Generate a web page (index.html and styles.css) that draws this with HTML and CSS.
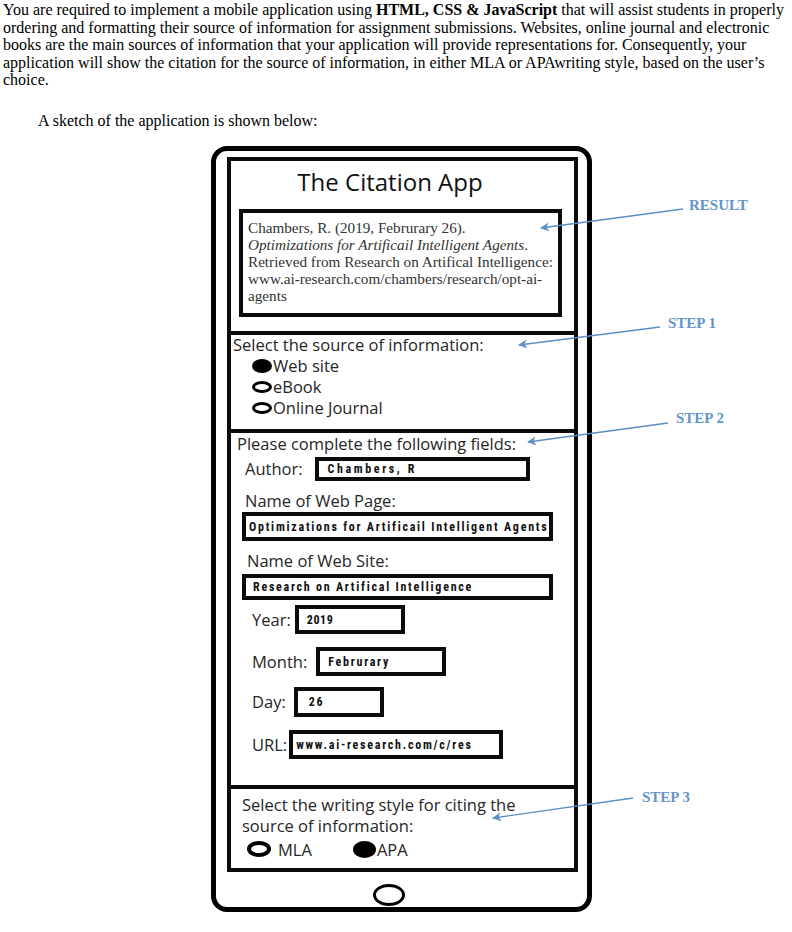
FILE: index.html
```html
<!DOCTYPE html>
<html lang="en">
<head>
  <meta charset="UTF-8" />
  <title>The Citation App - Sketch</title>
  <link rel="stylesheet" href="styles.css">
</head>
<body>
  <p class="intro">
    You are required to implement a mobile application using <b>HTML, CSS &amp; JavaScript</b> that will assist students in properly<br>
    ordering and formatting their source of information for assignment submissions. Websites, online journal and electronic<br>
    books are the main sources of information that your application will provide representations for. Consequently, your<br>
    application will show the citation for the source of information, in either MLA or APAwriting style, based on the user’s<br>
    choice.
  </p>

  <p class="lead">A sketch of the application is shown below:</p>

  <div class="phone">
    <div class="screen">

      <section class="top">
        <h1 class="app-title">The Citation App</h1>
        <div class="result">
          Chambers, R. (2019, Februrary 26).<br>
          <i>Optimizations for Artificail Intelligent Agents</i>.<br>
          Retrieved from Research on Artifical Intelligence:<br>
          www.ai-research.com/chambers/research/opt-ai-<br>
          agents
        </div>
      </section>

      <section class="source">
        <div class="heading">Select the source of information:</div>
        <div class="opt"><span class="dot on"></span>Web site</div>
        <div class="opt"><span class="dot"></span>eBook</div>
        <div class="opt"><span class="dot"></span>Online Journal</div>
      </section>

      <section class="fields">
        <div class="heading">Please complete the following fields:</div>

        <div class="row row-author">
          <span class="label">Author:</span>
          <span class="box box-author">Chambers, R</span>
        </div>

        <div class="label block page-label">Name of Web Page:</div>
        <div class="box wide page-box">Optimizations for Artificail Intelligent Agents</div>

        <div class="label block site-label">Name of Web Site:</div>
        <div class="box wide site-box">Research on Artifical Intelligence</div>

        <div class="row row-year">
          <span class="label">Year:</span>
          <span class="box box-year">2019</span>
        </div>
        <div class="row row-month">
          <span class="label">Month:</span>
          <span class="box box-month">Februrary</span>
        </div>
        <div class="row row-day">
          <span class="label">Day:</span>
          <span class="box box-day">26</span>
        </div>
        <div class="row row-url">
          <span class="label">URL:</span>
          <span class="box box-url">www.ai-research.com/c/res</span>
        </div>
      </section>

      <section class="style">
        <div class="heading">Select the writing style for citing the<br>source of information:</div>
        <div class="styles">
          <span class="pick"><span class="dot big"></span>MLA</span>
          <span class="pick apa"><span class="dot big on"></span>APA</span>
        </div>
      </section>

    </div>
    <div class="home"></div>
  </div>

  <!-- annotations -->
  <svg class="arrows" width="792" height="932" viewBox="0 0 792 932">
    <defs>
      <marker id="head" viewBox="0 0 10 10" refX="9" refY="5" markerWidth="7" markerHeight="7" orient="auto">
        <path d="M10 5 L0 0 L3 5 L0 10 Z" fill="#5b8fc6" />
      </marker>
    </defs>
    <line x1="683" y1="209" x2="541" y2="228" marker-end="url(#head)" />
    <line x1="660" y1="327" x2="519" y2="345" marker-end="url(#head)" />
    <line x1="668" y1="423" x2="528" y2="442" marker-end="url(#head)" />
    <line x1="633" y1="798" x2="493" y2="818" marker-end="url(#head)" />
  </svg>
  <div class="note note-result">RESULT</div>
  <div class="note note-step1">STEP 1</div>
  <div class="note note-step2">STEP 2</div>
  <div class="note note-step3">STEP 3</div>
</body>
</html>
```

FILE: styles.css
```css
* {
  margin: 0;
  padding: 0;
  box-sizing: border-box;
}

body {
  position: relative;
  width: 792px;
  height: 932px;
  background: #fff;
  color: #000;
  font-family: "Liberation Serif", "Times New Roman", serif;
  overflow: hidden;
}

.intro {
  font-size: 16px;
  line-height: 17.5px;
  padding: 1px 0 0 3px;
  white-space: nowrap;
}

.lead {
  font-size: 16px;
  line-height: 17.5px;
  margin-top: 23px;
  padding-left: 38px;
}

/* phone sketch */
.phone {
  width: 381px;
  margin: 17px 0 0 211px;
  border: 5px solid #000;
  border-radius: 16px;
  padding: 6px 9px 0 11px;
}

.screen {
  border: 4px solid #0c0c0c;
  font-family: "Open Sans", "Noto Sans", sans-serif;
  color: #262626;
}

.screen section + section {
  border-top: 4px solid #0c0c0c;
}

.heading {
  font-size: 16.5px;
  line-height: 20px;
}

.top {
  padding-bottom: 14px;
}

.app-title {
  font-weight: 400;
  font-size: 24px;
  line-height: 30px;
  margin-top: 6px;
  text-align: center;
  padding-right: 25px;
  color: #111;
}

.result {
  height: 108px;
  margin: 12px 12px 0 8px;
  border: 4px solid #0c0c0c;
  padding: 6px 0 0 5px;
  font-family: "Liberation Serif", "Times New Roman", serif;
  font-size: 15.2px;
  line-height: 17px;
  color: #333;
  white-space: nowrap;
}

.source {
  padding: 0 0 11px 2px;
}

.opt {
  display: flex;
  align-items: center;
  height: 21px;
  padding-left: 19px;
  font-size: 16.5px;
}

.dot {
  display: inline-block;
  width: 20px;
  height: 12px;
  border: 3px solid #000;
  border-radius: 50%;
  margin-right: 1px;
}

.dot.on {
  background: #000;
  height: 14px;
}

.fields {
  padding: 1px 0 26px 6px;
}

.label {
  font-size: 16.5px;
  line-height: 20px;
}

.row {
  display: flex;
  align-items: center;
}

.block {
  display: block;
  margin-top: 10px;
}

.box {
  display: flex;
  align-items: center;
  border: 4px solid #0c0c0c;
  padding-left: 8px;
  font-family: "Roboto Condensed", Roboto, "Liberation Sans", sans-serif;
  font-weight: 700;
  font-size: 12px;
  letter-spacing: 1.75px;
  color: #111;
  white-space: nowrap;
  overflow: hidden;
}

.row-author {
  margin: 3px 0 0 8px;
}
.box-author {
  width: 215px;
  height: 24px;
  margin-left: 12px;
  padding-left: 9px;
  letter-spacing: 2.6px;
}

.page-label { margin-left: 8px; }
.site-label { margin-left: 10px; }

.wide {
  width: 311px;
  margin-left: 5px;
  padding-left: 3px;
}
.page-box {
  height: 29px;
  margin-top: 1px;
}
.site-box {
  height: 26px;
  margin-top: 3px;
  padding-left: 7px;
}

.row-year,
.row-month,
.row-day,
.row-url {
  margin-left: 15px;
}

.row-year { margin-top: 5px; }
.box-year {
  width: 110px;
  height: 29px;
  margin-left: 4px;
  letter-spacing: 0.6px;
}

.row-month { margin-top: 13px; }
.box-month {
  width: 130px;
  height: 29px;
  margin-left: 9px;
}

.row-day { margin-top: 11px; }
.box-day {
  width: 90px;
  height: 30px;
  margin-left: 8px;
  padding-left: 11px;
}

.row-url { margin-top: 13px; }
.box-url {
  width: 214px;
  height: 29px;
  margin-left: 2px;
  padding-left: 3px;
}

.style {
  padding: 5px 0 9px 11px;
}

.style .heading {
  line-height: 21px;
}

.styles {
  display: flex;
  align-items: center;
  height: 20px;
  margin-top: 3px;
  padding-left: 5px;
  font-size: 16.5px;
}

.pick {
  display: flex;
  align-items: center;
}

.pick.apa {
  margin-left: 41px;
}

.dot.big {
  width: 24px;
  height: 16px;
  border-width: 4px;
  margin-right: 7px;
}

.dot.big.on {
  width: 23px;
  height: 17px;
  margin-right: 1px;
}

.home {
  width: 32px;
  height: 22px;
  margin: 12px 0 1px 146px;
  border: 3px solid #000;
  border-radius: 50%;
}

/* annotation layer */
.arrows {
  position: absolute;
  top: 0;
  left: 0;
  pointer-events: none;
}

.arrows line {
  stroke: #5b8fc6;
  stroke-width: 1.3;
}

.note {
  position: absolute;
  font-family: "Liberation Serif", "Times New Roman", serif;
  font-weight: 700;
  font-size: 15px;
  line-height: 18px;
  color: #6594c9;
}

.note-result { left: 689px; top: 196px; }
.note-step1  { left: 668px; top: 314px; }
.note-step2  { left: 676px; top: 409px; }
.note-step3  { left: 642px; top: 788px; }
```
